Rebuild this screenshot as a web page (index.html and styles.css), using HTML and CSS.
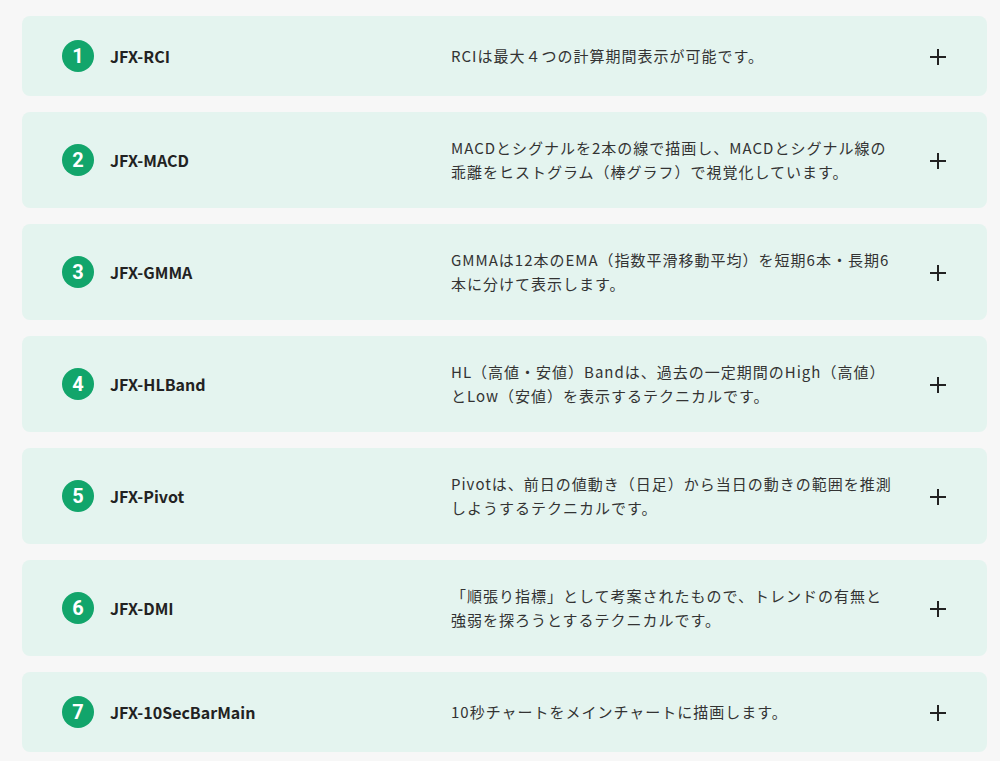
FILE: index.html
```html
<!DOCTYPE html>
<html lang="ja">
<head>
  <meta charset="UTF-8">
  <meta name="viewport" content="width=device-width, initial-scale=1.0">
  <title>テクニカル一覧</title>
  <link rel="stylesheet" href="styles.css">
</head>
<body>
  <main class="lista">
    <div class="item">
      <span class="num">1</span>
      <span class="nome">JFX-RCI</span>
      <p class="desc">RCIは最大４つの計算期間表示が可能です。</p>
      <span class="mais"></span>
    </div>
    <div class="item">
      <span class="num">2</span>
      <span class="nome">JFX-MACD</span>
      <p class="desc">MACDとシグナルを2本の線で描画し、MACDとシグナル線の乖離をヒストグラム（棒グラフ）で視覚化しています。</p>
      <span class="mais"></span>
    </div>
    <div class="item">
      <span class="num">3</span>
      <span class="nome">JFX-GMMA</span>
      <p class="desc">GMMAは12本のEMA（指数平滑移動平均）を短期6本・長期6本に分けて表示します。</p>
      <span class="mais"></span>
    </div>
    <div class="item">
      <span class="num">4</span>
      <span class="nome">JFX-HLBand</span>
      <p class="desc">HL（高値・安値）Bandは、過去の一定期間のHigh（高値）とLow（安値）を表示するテクニカルです。</p>
      <span class="mais"></span>
    </div>
    <div class="item">
      <span class="num">5</span>
      <span class="nome">JFX-Pivot</span>
      <p class="desc">Pivotは、前日の値動き（日足）から当日の動きの範囲を推測しようするテクニカルです。</p>
      <span class="mais"></span>
    </div>
    <div class="item">
      <span class="num">6</span>
      <span class="nome">JFX-DMI</span>
      <p class="desc">「順張り指標」として考案されたもので、トレンドの有無と強弱を探ろうとするテクニカルです。</p>
      <span class="mais"></span>
    </div>
    <div class="item">
      <span class="num">7</span>
      <span class="nome">JFX-10SecBarMain</span>
      <p class="desc">10秒チャートをメインチャートに描画します。</p>
      <span class="mais"></span>
    </div>
  </main>
</body>
</html>
```

FILE: styles.css
```css
:root {
  --fundo: #f7f7f7;
  --card: #e4f4ef;
  --verde: #12a56b;
  --texto: #222;
  --texto-desc: #333;
}
* { box-sizing: border-box; margin: 0; padding: 0; }
body {
  font-family: "Noto Sans CJK JP", "Noto Sans", sans-serif;
  background: var(--fundo);
  color: var(--texto);
}
.lista {
  width: 965px;
  margin-left: 22px;
  padding-top: 16px;
  display: flex;
  flex-direction: column;
  gap: 16px;
}
.item {
  background: var(--card);
  border-radius: 8px;
  padding: 24px 41px 24px 40px;
  display: flex;
  align-items: center;
}
.num {
  flex: 0 0 32px;
  height: 32px;
  border-radius: 50%;
  background: var(--verde);
  color: #fff;
  font-family: "Roboto", sans-serif;
  font-weight: 700;
  font-size: 20px;
  display: flex;
  align-items: center;
  justify-content: center;
}
.nome {
  flex: 0 0 325px;
  margin-left: 16px;
  font-size: 16px;
  font-weight: 700;
  color: var(--texto);
}
.desc {
  flex: 0 0 446px;
  margin-left: 16px;
  font-size: 15px;
  line-height: 24px;
  letter-spacing: 1px;
  color: var(--texto-desc);
}
.mais {
  position: relative;
  flex: 0 0 16px;
  height: 16px;
  margin-left: 33px;
  top: 1px;
}
.mais::before,
.mais::after {
  content: "";
  position: absolute;
  background: #222;
}
.mais::before { left: 0; right: 0; top: 7px; height: 2px; }
.mais::after { top: 0; bottom: 0; left: 7px; width: 2px; }
```
